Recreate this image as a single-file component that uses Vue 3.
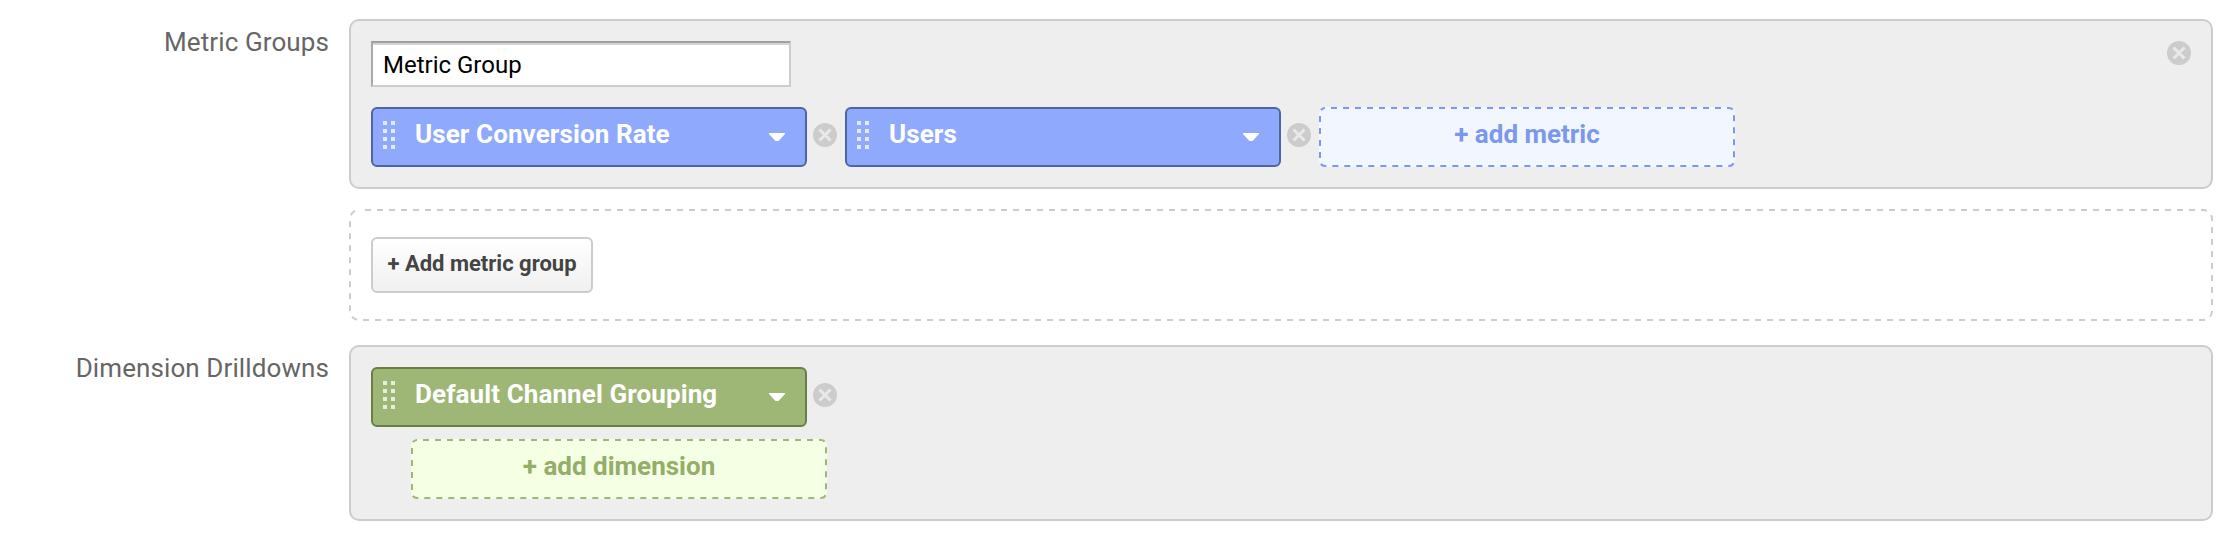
<template>
  <div class="editor">
    <div class="row">
      <div class="label">Metric Groups</div>

      <div class="groups">
        <div class="panel metric-group">
          <div class="group-head">
            <input v-model="groupName" class="group-name" type="text" />
            <svg class="remove" viewBox="0 0 24 24">
              <circle cx="12" cy="12" r="12" />
              <path d="M6.5 6.5L17.5 17.5M17.5 6.5L6.5 17.5" />
            </svg>
          </div>

          <div class="chips">
            <template v-for="metric in metrics" :key="metric">
              <div class="chip metric">
                <svg class="handle" viewBox="0 0 12 28">
                  <path d="M0 0h4v4h-4zM8 0h4v4h-4zM0 8h4v4h-4zM8 8h4v4h-4zM0 16h4v4h-4zM8 16h4v4h-4zM0 24h4v4h-4zM8 24h4v4h-4z" />
                </svg>
                <span class="name">{{ metric }}</span>
                <svg class="arrow" viewBox="0 0 16 8">
                  <path d="M0 0H16V1L9.5 8H6.5L0 1Z" />
                </svg>
              </div>
              <svg class="remove" viewBox="0 0 24 24">
                <circle cx="12" cy="12" r="12" />
                <path d="M6.5 6.5L17.5 17.5M17.5 6.5L6.5 17.5" />
              </svg>
            </template>
            <div class="add add-metric">
              <svg class="dashes"><rect x="1" y="1" rx="5" /></svg>
              + add metric
            </div>
          </div>
        </div>

        <div class="new-group">
          <svg class="dashes"><rect x="1" y="1" rx="9" /></svg>
          <button class="button" type="button">+ Add metric group</button>
        </div>
      </div>
    </div>

    <div class="row">
      <div class="label">Dimension Drilldowns</div>

      <div class="panel dimensions">
        <div v-for="dimension in dimensions" :key="dimension" class="chips">
          <div class="chip dimension">
            <svg class="handle" viewBox="0 0 12 28">
              <path d="M0 0h4v4h-4zM8 0h4v4h-4zM0 8h4v4h-4zM8 8h4v4h-4zM0 16h4v4h-4zM8 16h4v4h-4zM0 24h4v4h-4zM8 24h4v4h-4z" />
            </svg>
            <span class="name">{{ dimension }}</span>
            <svg class="arrow" viewBox="0 0 16 8">
              <path d="M0 0H16V1L9.5 8H6.5L0 1Z" />
            </svg>
          </div>
          <svg class="remove" viewBox="0 0 24 24">
            <circle cx="12" cy="12" r="12" />
            <path d="M6.5 6.5L17.5 17.5M17.5 6.5L6.5 17.5" />
          </svg>
        </div>
        <div class="add add-dimension">
          <svg class="dashes"><rect x="1" y="1" rx="5" /></svg>
          + add dimension
        </div>
      </div>
    </div>
  </div>
</template>

<script setup>
import { ref } from 'vue';

const groupName = ref('Metric Group');
const metrics = ref(['User Conversion Rate', 'Users']);
const dimensions = ref(['Default Channel Grouping']);
</script>

<style>
body {
  margin: 0;
  background: #fff;
}
</style>

<style scoped>
.editor,
.editor * {
  box-sizing: border-box;
}

.editor {
  display: flex;
  flex-direction: column;
  gap: 24px;
  min-height: 542px;
  padding: 19px 20px 21px 0;
  font-family: Roboto, 'Liberation Sans', sans-serif;
  font-size: 26px;
}

.row {
  display: flex;
  gap: 20px;
}

.label {
  width: 329px;
  padding-top: 8px;
  line-height: 30px;
  letter-spacing: 0.1px;
  text-align: right;
  color: #666;
}

.groups {
  display: flex;
  flex: 1;
  flex-direction: column;
  gap: 20px;
}

.panel {
  padding: 20px;
  border: 2px solid #ccc;
  border-radius: 10px;
  background: #eee;
}

.metric-group {
  height: 170px;
}

.group-head {
  display: flex;
  align-items: flex-start;
  justify-content: space-between;
  margin-bottom: 20px;
}

.group-name {
  width: 420px;
  height: 46px;
  padding: 2px 10px 0;
  border: 2px solid #ccc;
  border-top-color: #a0a0a0;
  border-left-color: #aaa;
  border-radius: 0;
  outline: none;
  background: #fff;
  box-shadow: inset 0 2px 0 #d4d4d4;
  font-family: inherit;
  font-size: 24px;
  color: #000;
}

.chips {
  display: flex;
  align-items: center;
}

.chip {
  display: flex;
  align-items: center;
  width: 436px;
  height: 60px;
  padding: 0 20px 0 10px;
  border: 2px solid;
  border-radius: 6px;
  font-weight: 700;
  color: #fff;
}

.metric {
  border-color: #5064a5;
  background: #8faafc;
}

.dimension {
  border-color: #697f45;
  background: #9eb676;
}

.handle {
  width: 12px;
  height: 28px;
  margin-top: -4px;
  fill: rgba(255, 255, 255, 0.75);
}

.name {
  flex: 1;
  padding: 0 0 6px 20px;
  line-height: 30px;
  letter-spacing: 0.1px;
  white-space: nowrap;
}

.arrow {
  width: 16px;
  height: 8px;
  fill: #fff;
}

.remove {
  width: 24px;
  height: 24px;
  fill: #ccc;
}

.remove path {
  fill: none;
  stroke: #e9e9e9;
  stroke-width: 3;
}

.chips .remove {
  margin: 0 8px 4px 6px;
}

.add {
  position: relative;
  width: 416px;
  height: 60px;
  padding-top: 12px;
  border-radius: 6px;
  font-weight: 700;
  line-height: 30px;
  text-align: center;
}

/* dashed outline drawn over the edge of its box */
.dashes {
  position: absolute;
  top: 0;
  left: 0;
  width: 100%;
  height: 100%;
  pointer-events: none;
}

.dashes rect {
  width: calc(100% - 2px);
  height: calc(100% - 2px);
  fill: none;
  stroke: #ccc;
  stroke-width: 2;
  stroke-dasharray: 6 6;
  stroke-dashoffset: 6;
}

.add-metric {
  background: #f2f6ff;
  color: #7b98ea;
}

.add-metric .dashes rect {
  stroke: #7b98ea;
}

.add-dimension {
  margin: 12px 0 0 40px;
  background: #f4ffe4;
  color: #94ae6a;
}

.add-dimension .dashes rect {
  stroke: #9eb676;
}

.new-group {
  position: relative;
  display: flex;
  align-items: center;
  height: 112px;
  padding: 0 22px;
  border-radius: 10px;
}

.button {
  width: 222px;
  height: 56px;
  padding: 0 0 4px;
  border: 2px solid #ccc;
  border-radius: 6px;
  background: linear-gradient(#fff, #f0f0f0);
  font-family: inherit;
  font-size: 22px;
  font-weight: 700;
  color: #444;
}

.dimensions {
  flex: 1;
  height: 176px;
}
</style>
